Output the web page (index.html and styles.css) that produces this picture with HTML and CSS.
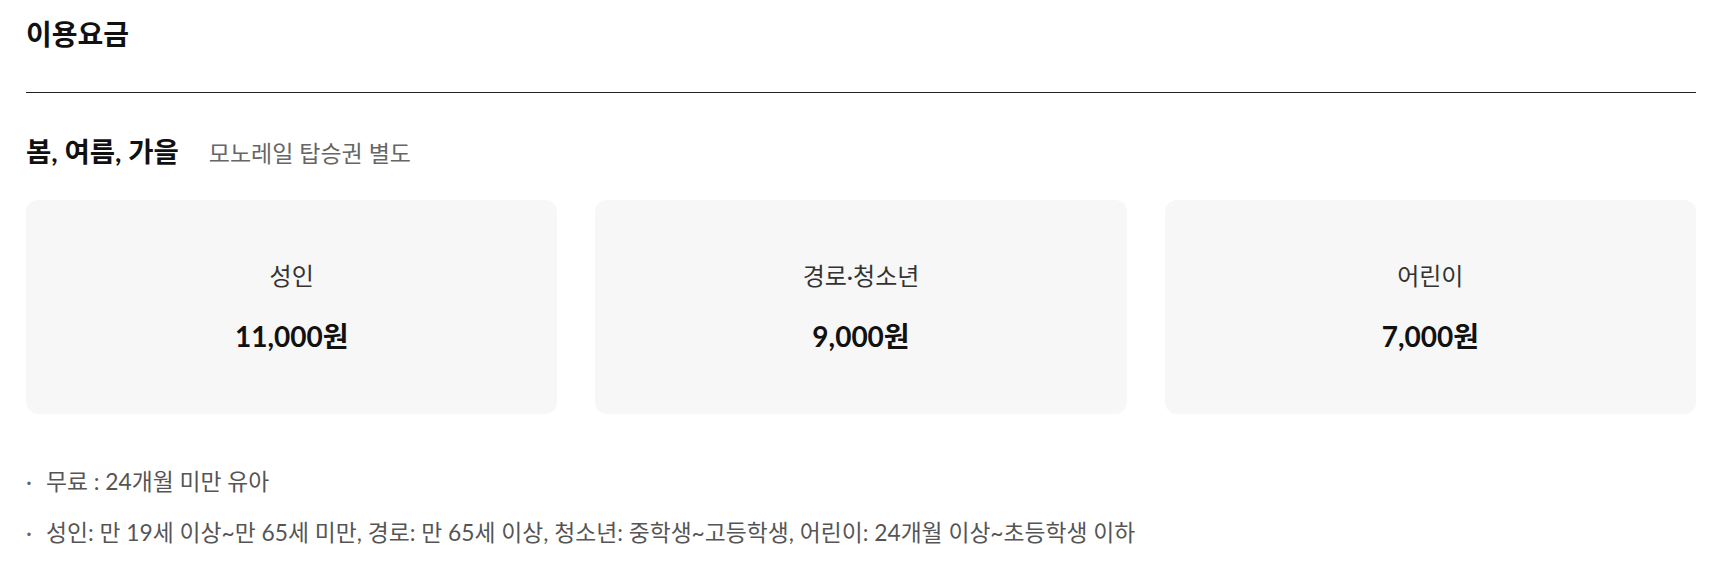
FILE: index.html
```html
<!DOCTYPE html>
<html>

<head>
    <title>이용요금</title>
    <link rel="stylesheet" href="styles.css">
</head>

<body>
    <div class="fee">
        <h2 class="fee-title">이용요금</h2>

        <div class="season">
            <h3>봄, 여름, 가을</h3>
            <span class="note">모노레일 탑승권 별도</span>
        </div>

        <div class="cards">
            <div class="card">
                <p class="who">성인</p>
                <p class="price">11,000원</p>
            </div>
            <div class="card">
                <p class="who">경로·청소년</p>
                <p class="price">9,000원</p>
            </div>
            <div class="card">
                <p class="who">어린이</p>
                <p class="price">7,000원</p>
            </div>
        </div>

        <ul class="info">
            <li>무료 : 24개월 미만 유아</li>
            <li>성인: 만 19세 이상~만 65세 미만, 경로: 만 65세 이상, 청소년: 중학생~고등학생, 어린이: 24개월 이상~초등학생 이하</li>
        </ul>
    </div>
</body>

</html>
```

FILE: styles.css
```css
body {
    font-family: Lato, "Noto Sans CJK KR", sans-serif;
    margin: 0;
    padding: 0;
    color: #111;
    background: #fff;
}

.fee {
    padding: 0 21px 0 26px;
}

.fee-title {
    margin: 0;
    padding: 16px 0 40px;
    font-size: 28px;
    line-height: 36px;
    font-weight: bold;
    border-bottom: 1px solid #222;
}

.season {
    display: flex;
    align-items: baseline;
    margin-top: 41px;
}

.season h3 {
    margin: 0;
    font-size: 27.5px;
    line-height: 36px;
    font-weight: bold;
}

.note {
    margin-left: 30px;
    font-size: 23px;
    color: #666;
}

.cards {
    display: grid;
    grid-template-columns: 1fr 1fr 1fr;
    gap: 38px;
    margin-top: 30px;
}

.card {
    height: 214px;
    border-radius: 12px;
    background-color: #f7f7f7;
    display: flex;
    flex-direction: column;
    align-items: center;
    justify-content: center;
}

.card p {
    margin: 0;
}

.who {
    font-size: 24px;
    line-height: 30px;
    color: #333;
}

.price {
    margin-top: 27px !important;
    font-size: 28px;
    line-height: 36px;
    font-weight: bold;
}

.info {
    list-style: none;
    margin: 52px 0 0;
    padding: 0;
}

.info li {
    display: flex;
    font-size: 22.8px;
    line-height: 30px;
    color: #555;
}

.info li + li {
    margin-top: 21px;
}

.info li::before {
    content: "·";
    width: 20px;
    flex-shrink: 0;
    color: #666;
}
```
